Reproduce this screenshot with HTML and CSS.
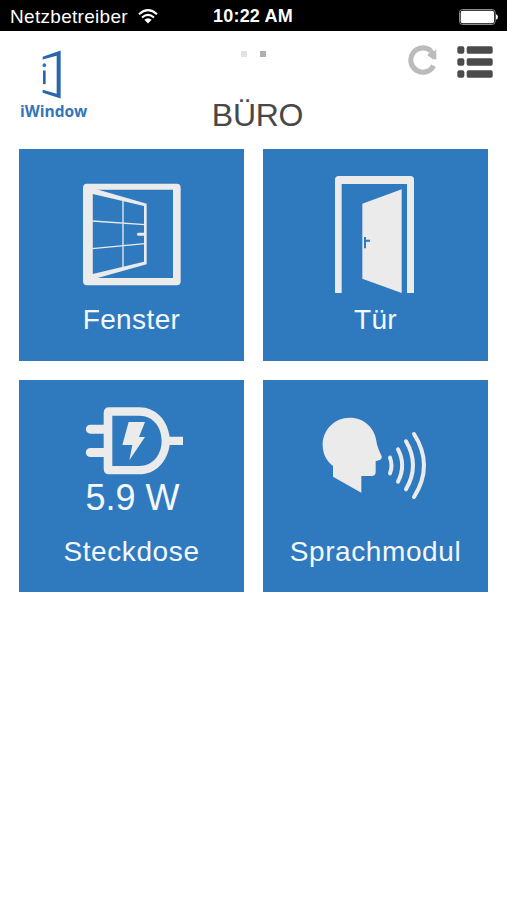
FILE: index.html
```html
<!DOCTYPE html>
<html lang="de">
<head>
    <meta charset="UTF-8">
    <meta name="viewport" content="width=device-width, initial-scale=1.0">
    <title>iWindow</title>
    <link rel="stylesheet" href="styles.css">
</head>
<body>
    <!-- Statusleiste -->
    <div class="status-bar">
        <div class="carrier">
            <span>Netzbetreiber</span>
            <svg class="wifi" viewBox="0 0 60 44">
                <path d="M3 15Q30 -9 57 15" fill="none" stroke="#fff" stroke-width="6"/>
                <path d="M12 25Q30 9 48 25" fill="none" stroke="#fff" stroke-width="6"/>
                <path d="M19 32Q30 23 41 32L30 43z" fill="#fff"/>
            </svg>
        </div>
        <div class="time">10:22 AM</div>
        <svg class="battery" viewBox="0 0 117 48">
            <rect x="1.5" y="1.5" width="107" height="45" rx="9" fill="none" stroke="#aaa" stroke-width="2.5"/>
            <rect x="5" y="5" width="100" height="38" rx="6" fill="#fff"/>
            <path d="M111 16Q117 18 117 24T111 32z" fill="#fff"/>
        </svg>
    </div>

    <!-- Kopfbereich -->
    <div class="header">
        <div class="logo">
            <svg class="logo-icon" viewBox="0 0 57 146">
                <path d="M2 20L56 1V145L2 128V119L44 131V17L2 28z" fill="#2867ae"/>
                <circle cx="7" cy="45" r="5.5" fill="#2f74bd"/>
                <path d="M3 61H11V102H3z" fill="#2867ae"/>
            </svg>
            <span class="logo-text">iWindow</span>
        </div>
        <div class="title-area">
            <div class="dots">
                <span class="dot"></span>
                <span class="dot active"></span>
            </div>
            <h1>BÜRO</h1>
        </div>
        <div class="actions">
            <svg class="refresh" viewBox="0 0 86 88">
                <path d="M76 61A36 36 0 1 1 68 17" fill="none" stroke="#bbb" stroke-width="15"/>
                <path d="M84 13V42H74L57 30L72 12L77 18z" fill="#bbb"/>
            </svg>
            <svg class="menu" viewBox="0 0 108 96">
                <g fill="#4b4b4b">
                    <rect x="1" y="1" width="21" height="22" rx="6"/>
                    <rect x="29" y="1" width="78" height="22" rx="5"/>
                    <rect x="1" y="37" width="21" height="22" rx="6"/>
                    <rect x="29" y="37" width="78" height="22" rx="5"/>
                    <rect x="1" y="73" width="21" height="22" rx="6"/>
                    <rect x="29" y="73" width="78" height="22" rx="5"/>
                </g>
            </svg>
        </div>
    </div>

    <!-- Kacheln -->
    <div class="tiles">
        <div class="tile">
            <svg class="tile-icon" viewBox="-153 -63 675 444">
                <path fill-rule="evenodd" d="M51 41H320Q332 41 332 53V334Q332 346 320 346H51Q39 346 39 334V53Q39 41 51 41zM67 59V324H309V59z"/>
                <path fill-rule="evenodd" d="M66 55L80 58L230 101V283L80 325L66 328zM68 72V312L222 275V108z"/>
                <path d="M159 92V292M67 153L224 164M67 236L224 221" fill="none" stroke="#ebebeb" stroke-width="4"/>
                <path d="M224 188H205Q201 188 201 192.500T205 197H224z"/>
            </svg>
            <div class="label">Fenster</div>
        </div>
        <div class="tile">
            <svg class="tile-icon" viewBox="-141 -48 675 444">
                <path d="M75 384V44Q75 33 86 33H301Q312 33 312 44V384H291V57H95V384z"/>
                <path d="M157 116L275 73V384L157 341z"/>
                <path d="M162 216H168V224H180V230H168V250H162z" fill="#2f7abf"/>
            </svg>
            <div class="label">Tür</div>
        </div>
        <div class="tile lower">
            <svg class="tile-icon short" viewBox="-93 -45 675 291">
                <path fill-rule="evenodd" d="M178 37H268C316 37 352 74 359 125H399V150H359C352 201 316 238 268 238H178Q161 238 161 221V186H121A13.500 13.500 0 0 1 121 159H161V116H121A13.500 13.500 0 0 1 121 89H161V54Q161 37 178 37zM187 62V213H268C310 213 335 178 335 137.500S310 62 268 62z"/>
                <path d="M236 81H285L267 126H285L238 196L247 150H217z"/>
            </svg>
            <div class="value">5.9 W</div>
            <div class="label">Steckdose</div>
        </div>
        <div class="tile lower">
            <svg class="tile-icon" viewBox="-51 -45 675 444">
                <path d="M159 213C139 198 128 175 128 150C128 104 164 68 209 68C252 68 286 99 290 143Q291 153 305 184Q307 190 301 194L287 199V230Q287 243 274 243H244V293L159 245z"/>
                <path d="M330 188Q339 212 330 235M354 163Q379 211 354 260M378 139Q420 211 378 283M402 117Q462 211 402 306" fill="none" stroke="#ebebeb" stroke-width="12" stroke-linecap="round"/>
            </svg>
            <div class="label">Sprachmodul</div>
        </div>
    </div>
</body>
</html>
```
FILE: styles.css
```css
body {
    margin: 0;
    font-family: "Liberation Sans", Arial, sans-serif;
    background-color: #fff;
}
.status-bar {
    display: grid;
    grid-template-columns: 1fr auto 1fr;
    align-items: center;
    height: 31px;
    box-sizing: border-box;
    padding: 2px 9px 0 10px;
    background-color: #000;
    color: #fff;
}
.carrier {
    display: flex;
    align-items: center;
    gap: 10px;
    font-size: 19px;
    letter-spacing: 0.3px;
}
.wifi {
    width: 20px;
    height: 15px;
}
.time {
    padding-right: 2px;
    font-size: 18px;
    font-weight: bold;
    letter-spacing: 0.2px;
}
.battery {
    justify-self: end;
    width: 39px;
    height: 16px;
}
.header {
    display: grid;
    grid-template-columns: 1fr auto 1fr;
    height: 118px;
    box-sizing: border-box;
    padding: 0 14px 0 20px;
}
.logo {
    display: flex;
    flex-direction: column;
    align-items: flex-start;
    padding-top: 19px;
}
.logo-icon {
    width: 19px;
    height: 49px;
    margin-left: 22px;
}
.logo-text {
    margin-top: 1px;
    font-family: "Open Sans", sans-serif;
    font-size: 15.5px;
    font-weight: bold;
    line-height: 22px;
    color: #3474b9;
}
.title-area {
    display: flex;
    flex-direction: column;
    align-items: center;
    padding-left: 2px;
}
.dots {
    display: flex;
    gap: 13px;
    padding: 20px 8px 0 0;
}
.dot {
    width: 6px;
    height: 6px;
    background-color: #e2e2e2;
}
.dot.active {
    background-color: #b0b0b0;
}
h1 {
    margin: 40px 0 0;
    font-size: 32px;
    font-weight: normal;
    line-height: 36px;
    letter-spacing: -0.3px;
    color: #484848;
}
.actions {
    display: flex;
    justify-content: flex-end;
    align-items: flex-start;
    gap: 20px;
    padding-top: 14px;
}
.refresh {
    width: 29px;
    height: 30px;
}
.menu {
    width: 36px;
    height: 32px;
    margin-top: 1px;
}
.tiles {
    display: grid;
    grid-template-columns: 225px 225px;
    grid-auto-rows: 212px;
    gap: 19px;
    padding: 0 19px;
}
.tile {
    display: flex;
    flex-direction: column;
    box-sizing: border-box;
    padding-bottom: 21px;
    background-color: #2f7abf;
    color: #f4f8fc;
    text-align: center;
}
.tile.lower {
    padding-bottom: 20px;
}
.tile-icon {
    width: 225px;
    height: 148px;
    fill: #ebebeb;
}
.tile-icon.short {
    height: 97px;
}
.value {
    padding-left: 2px;
    font-size: 36px;
    line-height: 42px;
}
.label {
    margin-top: auto;
    font-size: 28px;
    line-height: 40px;
    letter-spacing: 0.4px;
}
.lower .label {
    letter-spacing: 0.6px;
}
```
